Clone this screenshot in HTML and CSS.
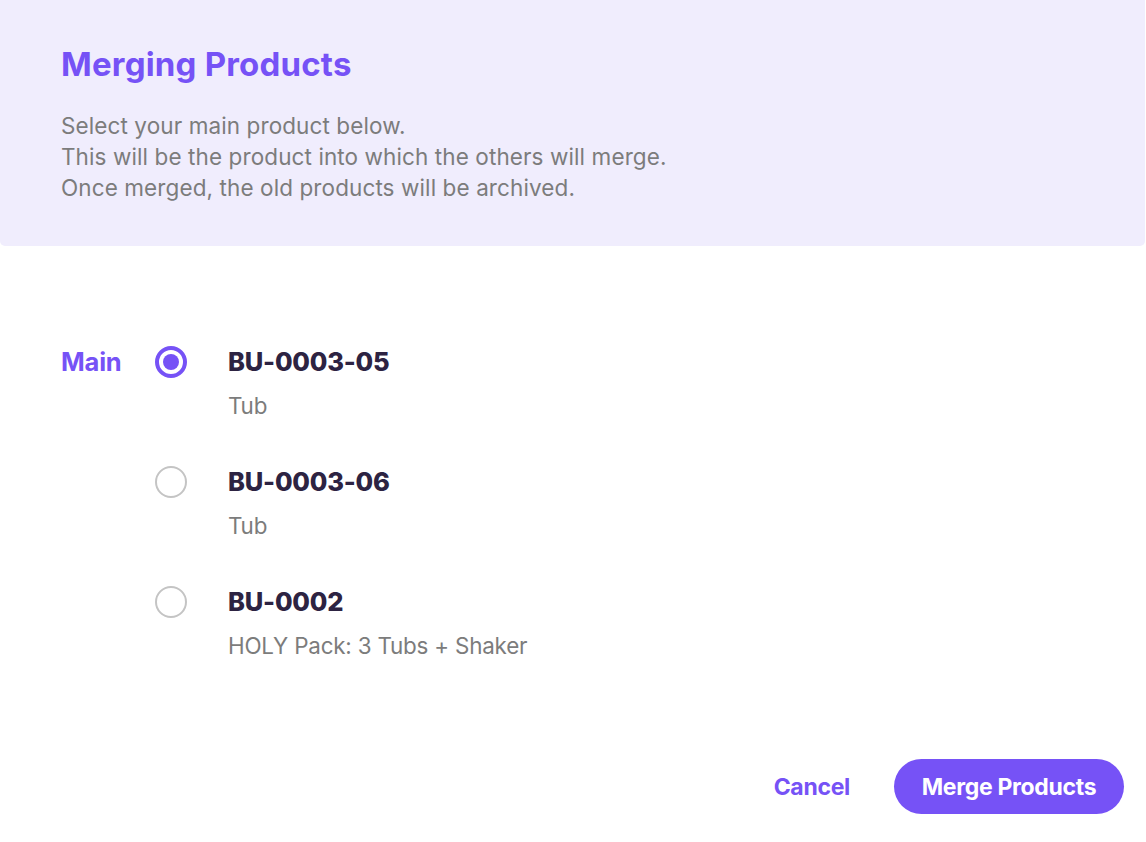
FILE: index.html
```html
<!DOCTYPE html>
<html>
<head>
<meta charset="utf-8">
<link rel="stylesheet" href="styles.css">
</head>
<body>
<div class="dialog">
  <header class="head">
    <h1 class="title">Merging Products</h1>
    <p class="desc">Select your main product below.<br>This will be the product into which the others will merge.<br>Once merged, the old products will be archived.</p>
  </header>
  <div class="list">
    <div class="row">
      <div class="label">Main</div>
      <div class="radio on"><span class="dot"></span></div>
      <div class="info">
        <div class="sku">BU-0003-05</div>
        <div class="name">Tub</div>
      </div>
    </div>
    <div class="row">
      <div class="label"></div>
      <div class="radio"></div>
      <div class="info">
        <div class="sku">BU-0003-06</div>
        <div class="name">Tub</div>
      </div>
    </div>
    <div class="row">
      <div class="label"></div>
      <div class="radio"></div>
      <div class="info">
        <div class="sku">BU-0002</div>
        <div class="name">HOLY Pack: 3 Tubs + Shaker</div>
      </div>
    </div>
  </div>
  <div class="actions">
    <button class="cancel">Cancel</button>
    <button class="primary">Merge Products</button>
  </div>
</div>
</body>
</html>
```
FILE: styles.css
```css
* { box-sizing: border-box; }
html, body { margin: 0; padding: 0; background: #fff; }
body {
  font-family: "Inter", "Liberation Sans", sans-serif;
  width: 1146px;
  height: 842px;
  overflow: hidden;
}
.dialog { width: 1146px; }
.head {
  width: 1145px;
  height: 246px;
  background: #f0edfd;
  border-radius: 0 0 5px 5px;
  padding: 42px 61px 0;
}
.title {
  margin: 0;
  font-size: 33px;
  line-height: 44px;
  font-weight: 700;
  color: #7652f6;
  letter-spacing: 0.2px;
}
.desc {
  margin: 24px 0 0;
  font-size: 22.5px;
  line-height: 31px;
  color: #7c7c7c;
  font-weight: 400;
  letter-spacing: 0.1px;
}
.list {
  padding: 97px 0 0 61px;
  display: flex;
  flex-direction: column;
  gap: 42px;
}
.row {
  display: flex;
  align-items: flex-start;
}
.label {
  width: 94px;
  font-size: 25.5px;
  line-height: 38px;
  font-weight: 700;
  color: #7652f6;
  letter-spacing: -0.2px;
}
.radio {
  width: 32px;
  height: 32px;
  margin-top: 3px;
  border-radius: 50%;
  border: 2px solid #c4c4c4;
  display: flex;
  align-items: center;
  justify-content: center;
}
.radio.on { border: 4px solid #7652f6; }
.dot {
  width: 16px;
  height: 16px;
  border-radius: 50%;
  background: #7652f6;
}
.info { margin-left: 41px; }
.sku {
  font-size: 25.5px;
  line-height: 38px;
  font-weight: 800;
  color: #2d2342;
  letter-spacing: -0.2px;
}
.name {
  margin-top: 10px;
  font-size: 22.4px;
  line-height: 30px;
  color: #7c7c7c;
  letter-spacing: -0.2px;
}
.actions {
  display: flex;
  justify-content: flex-end;
  align-items: center;
  padding: 98px 22px 0 0;
  gap: 44px;
}
button {
  font-family: inherit;
  border: none;
  cursor: pointer;
  font-weight: 700;
  font-size: 23px;
  letter-spacing: -0.3px;
}
.cancel {
  background: none;
  color: #7652f6;
  padding: 0;
}
.primary {
  background: #7652f6;
  color: #fff;
  height: 55px;
  width: 230px;
  border-radius: 28px;
}
```
